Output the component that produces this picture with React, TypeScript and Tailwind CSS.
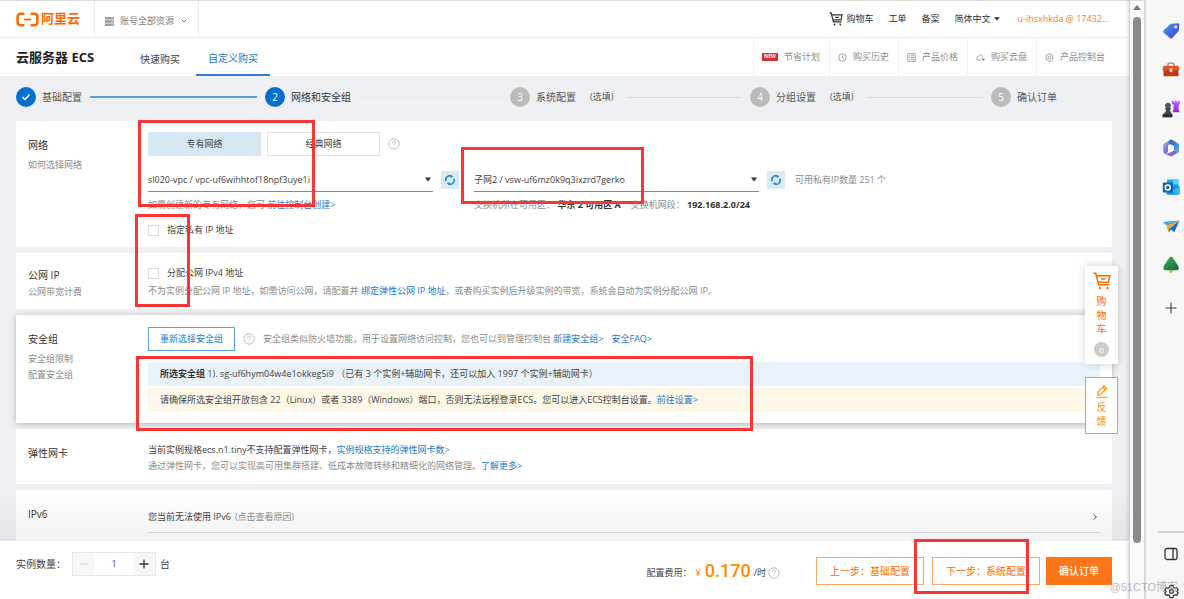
import React from 'react';

function HelpIcon() {
  return (
    <svg className="size-3 shrink-0" viewBox="0 0 12 12" fill="none" stroke="#b8b8b8" strokeWidth="0.9" aria-hidden="true">
      <circle cx="6" cy="6" r="5.2" />
      <path d="M4.4 4.8c0-2.2 3.2-2.2 3.2-.2 0 1.2-1.6 1.2-1.6 2.4M6 8.2v.9" />
    </svg>
  );
}

function CartIcon({ className }: { className: string }) {
  return (
    <svg className={className} viewBox="0 0 18 18" fill="none" stroke="currentColor" strokeWidth="1.5" aria-hidden="true">
      <path d="M.5 1.2h2.2l3 11.6h10.6M3.6 3.8h13.2l-1.4 6.4H5.2M8 7h4.5" />
      <circle cx="7" cy="16" r="1.2" fill="currentColor" stroke="none" />
      <circle cx="14.5" cy="16" r="1.2" fill="currentColor" stroke="none" />
    </svg>
  );
}

function Link({ children }: { children: React.ReactNode }) {
  return (
    <a href="#" className="text-[#1a7bd0]">
      {children}
    </a>
  );
}

function TopBar() {
  return (
    <header className="flex h-[38px] shrink-0 items-center border-t border-b border-t-[#d9d9d9] border-b-[#ededed] bg-white text-[9px] text-[#333]">
      <a href="#" className="flex w-[94px] items-center gap-0.5 pl-4 text-[13px] font-bold text-[#ff6a00]">
        <svg className="h-[15px] w-[23px]" viewBox="0 0 23 15" fill="none" stroke="#ff6a00" strokeWidth="2.6" aria-hidden="true">
          <path d="M8.4 1.8H4.6Q1.6 1.8 1.6 4.8v5.4q0 3 3 3h3.8M14.6 1.8h3.8q3 0 3 3v5.4q0 3-3 3h-3.8" />
          <path d="M8 7.5h7" strokeWidth="1.8" />
        </svg>
        阿里云
      </a>
      <button type="button" className="flex h-full w-[105px] items-center gap-1.5 border-r border-l border-[#ededed] pt-1 pl-2.5 text-[#808080]">
        <svg className="size-[9px]" viewBox="0 0 9 9" aria-hidden="true">
          <path d="M0 0h9v2.500H0zM0 3.250h9v2.500H0zM0 6.500h9V9H0z" fill="#9a9a9a" />
          <path d="M6.500 1.200h1.200M6.500 4.500h1.200M6.500 7.700h1.200" stroke="#fff" strokeWidth="0.800" />
        </svg>
        账号全部资源
        <svg className="size-2" viewBox="0 0 8 8" fill="none" stroke="#777" aria-hidden="true">
          <path d="m1.5 2.5 2.5 2.5 2.5-2.5" />
        </svg>
      </button>
      <nav className="ml-auto flex items-center gap-[15px] pr-5">
        <a href="#" className="flex items-center gap-0.5">
          <CartIcon className="h-[14px] w-4" />
          购物车
        </a>
        <a href="#">工单</a>
        <a href="#">备案</a>
        <button type="button" className="flex items-center gap-1">
          简体中文
          <svg className="h-1 w-1.5" viewBox="0 0 6 4" fill="#333" aria-hidden="true">
            <path d="M0 .3h6L3 3.6z" />
          </svg>
        </button>
        <a href="#" className="pl-0.5 text-[#ff7a2e]">u-ihsxhkda @ 17432...</a>
      </nav>
    </header>
  );
}

function ToolIcon({ name }: { name: string }) {
  if (name === 'new') {
    return <span className="flex h-2 w-4 items-center justify-center bg-[#d93026] text-[5px] font-bold text-white">NEW</span>;
  }
  return (
    <svg className="size-[9px]" viewBox="0 0 10 10" fill="none" stroke="#8c8c8c" strokeWidth="0.9" aria-hidden="true">
      {name === 'history' && <path d="M5 .8a4.2 4.2 0 1 0 0 8.4A4.2 4.2 0 1 0 5 .8M5 2.6V5.2l1.8 1" />}
      {name === 'price' && <path d="M.8.8h8.4v8.4H.8zM2.3 3h1M4.3 3h3.5M2.3 5h1M4.3 5h3.5M2.3 7h1M4.3 7h3.5" />}
      {name === 'disk' && (
        <>
          <path d="M5.2 8H2.4C.3 8 .2 5.4 2.1 5.1 2.3 1.4 7 1.4 7.3 4.8" />
          <path d="M6.3 7.2h3.2" strokeWidth="2" />
        </>
      )}
      {name === 'console' && (
        <>
          <path d="M5 .7 8.7 2.8v4.4L5 9.3 1.3 7.2V2.8z" />
          <circle cx="5" cy="5" r="1.6" />
        </>
      )}
    </svg>
  );
}

const tools = [
  ['new', '节省计划'],
  ['history', '购买历史'],
  ['price', '产品价格'],
  ['disk', '购买云盘'],
  ['console', '产品控制台'],
];

function ProductBar() {
  return (
    <div className="flex h-[38px] shrink-0 items-stretch bg-white">
      <h1 className="flex w-[128px] items-center pt-0.5 pl-4 text-[13px] font-bold text-[#222]">云服务器 ECS</h1>
      <a href="#" className="flex items-center px-3 pt-1 text-[10px] text-[#444]">快速购买</a>
      <a href="#" className="ml-1 flex items-center border-b-2 border-[#2d82cf] px-3 pt-1 text-[10px] text-[#1a7bd0]">自定义购买</a>
      <nav className="ml-auto flex pr-[15px] text-[9px] text-[#8c8c8c]">
        {tools.map(([icon, label]) => (
          <a key={label} href="#" className="flex items-center gap-1.5 border-l border-[#f2f2f2] pr-[9px] pl-2">
            <ToolIcon name={icon} />
            {label}
          </a>
        ))}
      </nav>
    </div>
  );
}

const steps = [
  { n: '1', label: '基础配置', state: 'done' },
  { n: '2', label: '网络和安全组', state: 'current' },
  { n: '3', label: '系统配置', state: 'todo', optional: true },
  { n: '4', label: '分组设置', state: 'todo', optional: true },
  { n: '5', label: '确认订单', state: 'todo' },
];

function Steps() {
  return (
    <ol className="grid grid-cols-[249fr_245fr_240fr_241fr_121fr] pt-[11px] pb-3.5 text-[10px] text-[#555]">
      {steps.map((s, i) => (
        <li key={s.n} className="flex h-5 items-center pr-2">
          <span
            className={
              s.state === 'todo'
                ? 'flex size-5 items-center justify-center rounded-full bg-[#bbb] text-white'
                : 'flex size-5 items-center justify-center rounded-full bg-[#0070cc] text-white'
            }
          >
            {s.state === 'done' ? (
              <svg className="size-2.5" viewBox="0 0 10 10" fill="none" stroke="#fff" strokeWidth="1.5" aria-hidden="true">
                <path d="m1.5 5 2.5 2.5L8.6 2.6" />
              </svg>
            ) : (
              s.n
            )}
          </span>
          <span className={s.state === 'current' ? 'ml-1.5 text-[#333]' : 'ml-1.5'}>{s.label}</span>
          {s.optional && <span className="ml-3.5 text-[9px]">(选填)</span>}
          {i < 4 && (
            <span
              className={
                s.state === 'done'
                  ? 'ml-2 h-0.5 flex-1 bg-[#5a9fdb]'
                  : s.optional
                    ? 'ml-3.5 h-px flex-1 bg-[#dadbdf]'
                    : 'ml-2 h-px flex-1 bg-[#e8e9ec]'
              }
            />
          )}
        </li>
      ))}
    </ol>
  );
}

type CardProps = {
  title: string;
  notes?: string[];
  compact?: boolean;
  raised?: boolean;
  children: React.ReactNode;
};

function Card({ title, notes = [], compact, raised, children }: CardProps) {
  return (
    <section className={raised ? 'relative flex bg-white pr-3 pl-3 shadow-[0_1px_6px_rgba(0,0,0,0.25)]' : 'flex bg-white pr-3 pl-3'}>
      <div className={compact ? 'w-[120px] shrink-0 pt-3.5' : 'w-[120px] shrink-0 pt-4'}>
        <h2 className="text-[10px] leading-4 text-[#333]">{title}</h2>
        <div className={compact ? 'pt-px' : 'pt-1'}>
          {notes.map((n) => (
            <a key={n} href="#" className="block text-[#8c8c8c]">
              {n}
            </a>
          ))}
        </div>
      </div>
      <div className="min-w-0 flex-1">{children}</div>
    </section>
  );
}

function Picker({ label, value }: { label: string; value: string }) {
  return (
    <div className="flex items-center gap-2">
      <div className="relative w-[285px] border-b border-[#888]">
        <select aria-label={label} className="h-[23px] w-full appearance-none bg-transparent pr-4 text-[#444]">
          <option>{value}</option>
        </select>
        <svg className="pointer-events-none absolute top-[9px] right-0.5 h-[5px] w-1.5" viewBox="0 0 6 5" fill="#333" aria-hidden="true">
          <path d="M0 .5h6L3 4.5z" />
        </svg>
      </div>
      <button type="button" aria-label="刷新" className="flex size-[18px] items-center justify-center bg-[#d9eaf7]">
        <svg className="size-3" viewBox="0 0 12 12" aria-hidden="true">
          <g fill="none" stroke="#1a7bd0" strokeWidth="1.4">
            <path d="M2 7.2A4 4 0 0 1 7.6 2.3M10 4.8A4 4 0 0 1 4.4 9.7" />
          </g>
          <path d="m7 .8 2.200 2-2.600.9zM5 11.200 2.800 9.200l2.600-.9z" fill="#1a7bd0" />
        </svg>
      </button>
    </div>
  );
}

function Tick({ label }: { label: string }) {
  return (
    <label className="flex h-4 items-center gap-2 text-[#444]">
      <input type="checkbox" className="size-[11px] appearance-none border border-[#ddd] bg-white" />
      {label}
    </label>
  );
}

function Settings() {
  return (
    <div className="flex flex-col gap-1.5 text-[9px] leading-4 text-[#444]">
      <Card title="网络" notes={['如何选择网络']}>
        <div className="flex items-center gap-1.5 pt-[11px]">
          <button type="button" className="h-6 w-[113px] bg-[#d7e8f5]">专有网络</button>
          <button type="button" className="h-6 w-[113px] border border-[#e4e4e4] bg-white">经典网络</button>
          <span className="pl-0.5"><HelpIcon /></span>
        </div>
        <div className="grid grid-cols-[326px_1fr] pt-3">
          <div>
            <Picker label="专有网络" value="sl020-vpc / vpc-uf6wihhtof18npf3uye1i" />
            <p className="pt-[5px] text-[#8c8c8c]">
              如需创建新的专有网络，您可 <Link>前往控制台创建&gt;</Link>
            </p>
          </div>
          <div>
            <div className="flex items-center gap-2.5">
              <Picker label="交换机" value="子网2 / vsw-uf6mz0k9q3ixzrd7gerko" />
              <span className="text-[#8c8c8c]">可用私有IP数量 251 个</span>
            </div>
            <p className="flex gap-2.5 pt-[5px] text-[#8c8c8c]">
              <span>交换机所在可用区： <b className="text-[#333]">华东 2 可用区 A</b></span>
              <span>交换机网段： <b className="text-[#333]">192.168.2.0/24</b></span>
            </p>
          </div>
        </div>
        <div className="pt-[9px] pb-[9px]">
          <Tick label="指定私有 IP 地址" />
        </div>
      </Card>

      <Card title="公网 IP" notes={['公网带宽计费']} compact>
        <div className="pt-3 pb-2.5">
          <Tick label="分配公网 IPv4 地址" />
          <p className="pt-0.5 text-[#8c8c8c]">
            不为实例分配公网 IP 地址，如需访问公网，请配置并 <Link>绑定弹性公网 IP 地址</Link>，或者购买实例后升级实例的带宽，系统会自动为实例分配公网 IP。
          </p>
        </div>
      </Card>

      <Card title="安全组" notes={['安全组限制', '配置安全组']} raised>
        <div className="flex items-center pt-3">
          <button type="button" className="h-6 w-[87px] border border-[#5a9fdb] bg-white text-[#1a7bd0]">重新选择安全组</button>
          <span className="px-2"><HelpIcon /></span>
          <p className="text-[#8c8c8c]">
            安全组类似防火墙功能，用于设置网络访问控制，您也可以到管理控制台 <Link>新建安全组&gt;</Link>
          </p>
          <span className="pl-2"><Link>安全FAQ&gt;</Link></span>
        </div>
        <div className="flex flex-col gap-0.5 pt-[11px] pb-[11px]">
          <p className="bg-[#e9f3fb] px-3 py-1">
            <b className="text-[#333]">所选安全组</b> 1). sg-uf6hym04w4e1okkeg5i9 （已有 3 个实例+辅助网卡，还可以加入 1997 个实例+辅助网卡）
          </p>
          <p className="bg-[#fff8e8] px-3 py-1">
            请确保所选安全组开放包含 22（Linux）或者 3389（Windows）端口，否则无法远程登录ECS。您可以进入ECS控制台设置。<Link>前往设置&gt;</Link>
          </p>
        </div>
      </Card>

      <Card title="弹性网卡">
        <div className="pt-[13px] pb-2.5">
          <p>当前实例规格ecs.n1.tiny不支持配置弹性网卡，<Link>实例规格支持的弹性网卡数&gt;</Link></p>
          <p className="text-[#8c8c8c]">
            通过弹性网卡，您可以实现高可用集群搭建、低成本故障转移和精细化的网络管理。<Link>了解更多&gt;</Link>
          </p>
        </div>
      </Card>

      <Card title="IPv6">
        <div className="flex items-center gap-1 border-b border-[#e0e0e0] pt-[19px] pb-[7px]">
          <span>您当前无法使用 IPv6</span>
          <span className="text-[#8c8c8c]">(点击查看原因)</span>
          <svg className="mr-0.5 ml-auto size-1.5" viewBox="0 0 6 6" fill="none" stroke="#555" aria-hidden="true">
            <path d="m1.5.5 3 2.5-3 2.5" />
          </svg>
        </div>
        <div className="h-8" />
      </Card>
    </div>
  );
}

function OrderBar() {
  return (
    <footer className="flex h-[58px] shrink-0 items-start bg-white pr-[17px] pl-4 text-[10px] text-[#444]">
      <div className="flex items-center pt-[11px]">
        <label htmlFor="quantity" className="w-14">实例数量：</label>
        <div className="flex h-6 border border-[#e8e8e8]">
          <button type="button" aria-label="减少" className="flex w-[22px] items-center justify-center bg-[#f7f8fa]">
            <svg className="size-2.5" viewBox="0 0 10 10" stroke="#ccc" aria-hidden="true"><path d="M.5 5h9" /></svg>
          </button>
          <input id="quantity" defaultValue="1" className="w-[38px] bg-white text-center text-[9px]" />
          <button type="button" aria-label="增加" className="flex w-[22px] items-center justify-center bg-[#f7f8fa]">
            <svg className="size-2.5" viewBox="0 0 10 10" stroke="#333" strokeWidth="1.3" aria-hidden="true"><path d="M.5 5h9M5 .5v9" /></svg>
          </button>
        </div>
        <span className="pl-1">台</span>
      </div>
      <div className="ml-auto flex items-center pt-4">
        <div className="flex h-7 items-center text-[9px]">
          <span className="pt-1">配置费用：</span>
          <span className="pt-1 pr-1 pl-1 text-[#ff8a00]">¥</span>
          <strong className="font-[Roboto,'Noto_Sans',sans-serif] text-[18px] leading-7 font-medium text-[#ff8a00]">0.170</strong>
          <span className="pt-1 pl-[3px]">/时</span>
          <span className="pt-1 pl-0.5"><HelpIcon /></span>
        </div>
        <button type="button" className="ml-9 h-7 w-[108px] border border-[#ffa766] text-[#ff6a00]">上一步：基础配置</button>
        <button type="button" className="ml-2 h-7 w-[108px] border border-[#ffa766] text-[#ff6a00]">下一步：系统配置</button>
        <button type="button" className="ml-1.5 h-7 w-[66px] bg-[#ff7519] font-medium text-white">确认订单</button>
      </div>
    </footer>
  );
}

function FloatingTools() {
  return (
    <div className="absolute top-[266px] right-[11px] flex w-[33px] flex-col gap-[13px] text-[10px] leading-[14px]">
      <a href="#" className="flex flex-col items-center bg-white pt-1.5 pb-[7px] text-[#ff6a00] shadow-[0_0_8px_rgba(0,0,0,0.18)]">
        <CartIcon className="size-[18px]" />
        <span className="pt-1">购</span>
        <span>物</span>
        <span>车</span>
        <span className="mt-1.5 flex size-[15px] items-center justify-center rounded-full bg-[#ccc] text-[8px] text-white">0</span>
      </a>
      <a href="#" className="flex flex-col items-center border border-[#ff9a2e] bg-white pt-1.5 pb-[5px] text-[#ff8a00]">
        <svg className="h-[14px] w-3" viewBox="0 0 12 14" fill="none" stroke="#ff8a00" strokeWidth="1.1" aria-hidden="true">
          <path d="m2 8.2 6-6.4 2.6 2.4-6 6.4-3 .6zM6.6 3.3l2.6 2.4M.5 13.2h11" />
        </svg>
        <span className="pt-0.5">反</span>
        <span>馈</span>
      </a>
    </div>
  );
}

function AppIcon({ name }: { name: string }) {
  return (
    <svg className="size-[18px]" viewBox="0 0 18 18" aria-hidden="true">
      <defs>
        <linearGradient id="tag" x2="1" y2="1"><stop stopColor="#4aa0f5" /><stop offset="1" stopColor="#3b3bd8" /></linearGradient>
        <linearGradient id="loopA" x2="1" y2="1"><stop stopColor="#a8b8f5" /><stop offset="1" stopColor="#5238a8" /></linearGradient>
        <linearGradient id="loopB" x2="1" y2="1"><stop stopColor="#2c58b8" /><stop offset="1" stopColor="#54b0f0" /></linearGradient>
        <linearGradient id="tree" x2="1" y2="1"><stop stopColor="#35b25e" /><stop offset="1" stopColor="#0c6b35" /></linearGradient>
        <linearGradient id="rook" x2="0" y2="1"><stop stopColor="#c65bff" /><stop offset="1" stopColor="#8a22e0" /></linearGradient>
      </defs>
      {name === '购物' && (
        <>
          <path d="M9.5 1.8 16 1.2q1.4 0 1.4 1.4l-.6 5.600q0 .8-.6 1.400l-6 6.400q-1 1-2.200 0l-6.300-5.200q-1.200-1.200-.1-2.400l6.300-6q.7-.6 1.600-.6z" fill="url(#tag)" />
          <circle cx="13.8" cy="4.8" r="1.6" fill="#f8dd7c" />
        </>
      )}
      {name === '工具' && (
        <>
          <path d="M6 5V3.200q0-1 1-1h4q1 0 1 1V5" fill="none" stroke="#8a8a8a" strokeWidth="1.3" />
          <rect x="1.5" y="7" width="15" height="8.3" rx="1" fill="#c23b10" />
          <path d="M1.500 4.800h15l1 4.400h-17z" fill="#e2531d" />
          <rect x="7.6" y="7.2" width="2.8" height="4" rx=".8" fill="#d8d8d8" />
        </>
      )}
      {name === '游戏' && (
        <>
          <path d="M10 .8h1.700v1.400H13V.8h1.800v1.400h1.400V.8h1.600V4l-1.200 1v4.400l1.200 2.800h-7.300L11.600 9V5L10 4z" fill="url(#rook)" />
          <circle cx="6" cy="5.6" r="2.9" fill="#555" />
          <path d="M3.200 8h5.600v1.500H8q0 3 2.300 4.800v3H.7v-3Q4 12.500 4 9.500h-.8z" fill="#444" />
          <path d="M.7 14.600h9.600v2.600H.7z" fill="#2d2d2d" />
        </>
      )}
      {name === 'Microsoft 365' && (
        <>
          <path d="M8.500.8 2.500 4.200q-1.300.8-1.300 2.300v5.200q0 2 1.800 3.200 2.700-.5 3-3V6.500L11.500 3z" fill="url(#loopA)" />
          <path d="M8.500.8q1-.4 2 .2l5.200 3.200q1.300.8 1.300 2.300v5q-1.400 1.800-5 0V7.300L7 4.500Q6.500 2 8.500.8z" fill="url(#loopB)" />
          <path d="m3 14.900 5 2.200q1 .4 2 0l5.700-3.300q1.300-.8 1.300-2.300-1.800 1.600-5 0l-4 2q-2.500 1.500-5 1.400z" fill="#8065d8" />
          <path d="m9 5.700 3 1.700v3.500l-3 1.700-3-1.700V7.400z" fill="#f7f7f7" />
        </>
      )}
      {name === 'Outlook' && (
        <>
          <path d="M6 1.500h9.500q1 0 1 1V9H5V2.500q0-1 1-1z" fill="#28a8ea" />
          <path d="M11 1.500h5.500V6H11z" fill="#50d9ff" />
          <path d="M4.500 8.500 17.500 8v7.500q0 1.200-1.200 1.200H5.700q-1.200 0-1.200-1.200z" fill="#1490df" />
          <path d="m17.500 8-8 5.500 6.500 3.200q1.500 0 1.500-1.200z" fill="#35b8f1" />
          <rect x=".8" y="4.500" width="10" height="10" rx="1" fill="#0a64ad" />
          <circle cx="5.800" cy="9.500" r="2.500" fill="none" stroke="#fff" strokeWidth="1.500" />
        </>
      )}
      {name === '投递' && (
        <>
          <path d="M.7 5 17.500 3.500 6.500 10z" fill="#35a9ed" />
          <path d="m17.500 3.500-5.200 11.700-4.500-4z" fill="#1966df" />
          <path d="M17.500 3.500 4.500 8.600l1.800 6.600 2-4.200z" fill="#f2ad20" />
          <path d="m6.300 15.200 3-2.600-1.500-1.600z" fill="#145b9c" />
        </>
      )}
      {name === '园林' && (
        <>
          <path d="M7.600 12h2.800v4.200q-1.400 1-2.800 0z" fill="#f1a51d" />
          <path d="M9 .8q1 0 1.600 1l3.200 4.400 2.600 4q1.500 3.800-2.400 4H4q-3.800-.2-2.300-4l2.500-4L7.400 1.800Q8 .8 9 .8z" fill="url(#tree)" />
        </>
      )}
    </svg>
  );
}

const apps = ['购物', '工具', '游戏', 'Microsoft 365', 'Outlook', '投递', '园林'];

function BrowserRail() {
  return (
    <aside className="flex w-10 shrink-0 flex-col border-l-2 border-[#d8d8d8] bg-[#f7f7f7] pt-[22px]">
      <div className="flex flex-col items-center gap-[21px] pl-3">
        {apps.map((a) => (
          <button key={a} type="button" aria-label={a}>
            <AppIcon name={a} />
          </button>
        ))}
        <button type="button" aria-label="添加" className="pt-1">
          <svg className="size-[18px]" viewBox="0 0 18 18" stroke="#444" strokeWidth="1.100" aria-hidden="true"><path d="M3.500 9h11M9 3.500v11" /></svg>
        </button>
      </div>
      <div className="mt-auto ml-3 flex flex-col items-center gap-[23px] border-t-2 border-[#d4d4d4] pt-3.5">
        <button type="button" aria-label="侧边栏">
          <svg className="size-[14px]" viewBox="0 0 14 14" fill="none" stroke="#333" strokeWidth="1.300" aria-hidden="true">
            <rect x="1" y="1.500" width="12" height="11" rx="2" />
            <path d="M9 1.500v11" />
          </svg>
        </button>
        <button type="button" aria-label="设置">
          <svg className="size-[15px]" viewBox="0 0 24 24" fill="none" stroke="#333" strokeWidth="2" strokeLinejoin="round" aria-hidden="true">
            <path d="m9.500 2.500-.7 3-2.200 1.300-3-.9L1.300 10l2.200 2-2.200 2.200 2.300 4 3-.9 2.200 1.300.7 3h5l.7-3 2.200-1.300 3 .9 2.300-4-2.200-2.200 2.200-2-2.300-4.100-3 .9-2.200-1.300-.7-3z" />
            <circle cx="12" cy="12" r="3" />
          </svg>
        </button>
      </div>
    </aside>
  );
}

function ScrollTrack() {
  return (
    <div className="flex w-[15px] shrink-0 flex-col items-center border-t border-l border-t-[#d9d9d9] border-l-[#cfcfcf] bg-[#fafafa] pt-1">
      <svg className="h-[5px] w-2" viewBox="0 0 8 5" fill="#777" aria-hidden="true"><path d="M4 0l4 5H0z" /></svg>
      <div className="mt-[7px] mb-14 w-2 flex-1 rounded-full bg-[#8b8b8b]" />
    </div>
  );
}

export default function App() {
  return (
    <div className="relative flex h-screen overflow-hidden bg-white font-['Open_Sans','Noto_Sans_CJK_SC',sans-serif] whitespace-nowrap">
      <div className="relative flex min-w-0 flex-1 flex-col">
        <TopBar />
        <ProductBar />
        <main className="relative min-h-0 flex-1 overflow-hidden bg-[#eff0f4] pr-[17px] pl-4">
          <Steps />
          <Settings />
          <div className="pointer-events-none absolute inset-x-0 bottom-0 h-[50px] bg-linear-to-b from-transparent to-black/5" />
        </main>
        <OrderBar />
        <FloatingTools />
        <div className="pointer-events-none absolute inset-y-0 right-0 w-1 bg-linear-to-r from-transparent to-black/10" />
      </div>
      <ScrollTrack />
      <BrowserRail />

      <div className="pointer-events-none absolute top-[120px] left-[138px] h-[87px] w-[177px] border-3 border-[#fb3535]" />
      <div className="pointer-events-none absolute top-[147px] left-[461px] h-[57px] w-[183px] border-3 border-[#fb3535]" />
      <div className="pointer-events-none absolute top-[214px] left-[135px] h-[93px] w-[55px] border-3 border-[#fb3535]" />
      <div className="pointer-events-none absolute top-[356px] left-[136px] h-[75px] w-[617px] border-3 border-[#fb3535]" />
      <div className="pointer-events-none absolute right-[155px] bottom-[5px] h-[55px] w-[115px] border-3 border-[#fb3535]" />
      <span className="pointer-events-none absolute right-1.5 bottom-1 font-['Liberation_Sans','Noto_Sans_CJK_SC',sans-serif] text-[11px] leading-4 text-[#999]/70">@51CTO博客</span>
    </div>
  );
}
